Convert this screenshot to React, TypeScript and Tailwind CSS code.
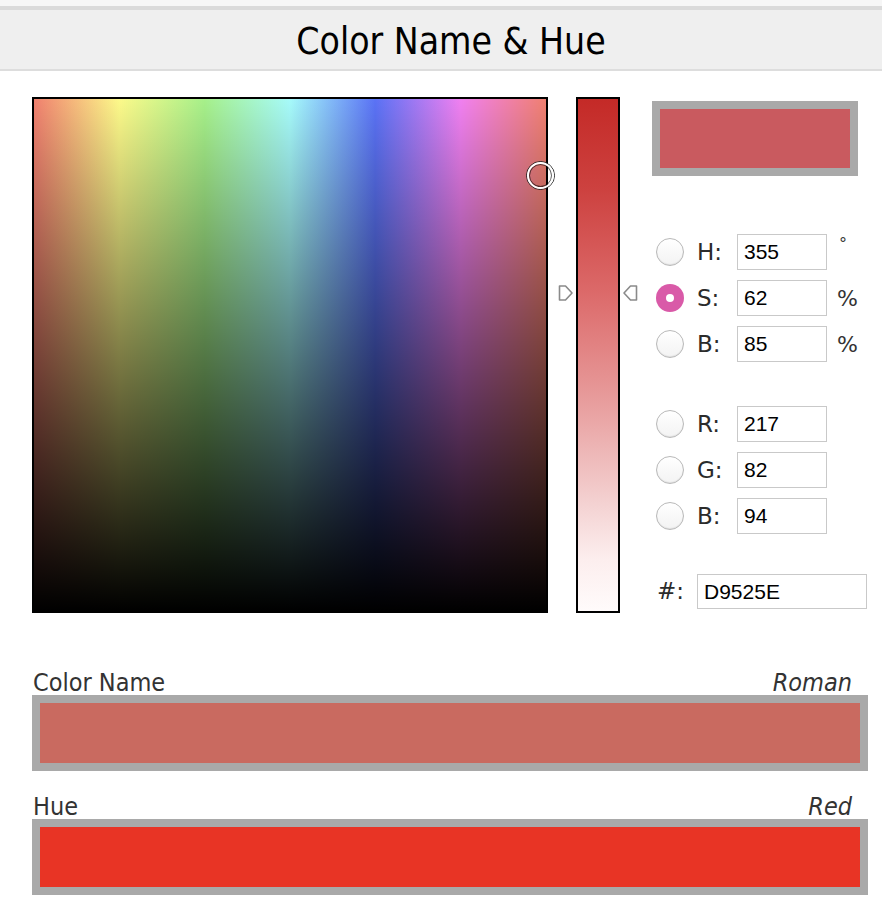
import React from "react";

const labelFont = { fontFamily: '"DejaVu Sans Condensed", "DejaVu Sans", sans-serif', fontStretch: "condensed" } as React.CSSProperties;

function Radio({ checked }: { checked?: boolean }) {
  if (checked) {
    return (
      <div className="w-[28px] h-[28px] rounded-full bg-[#d95aa8] flex items-center justify-center shrink-0">
        <div className="w-[8px] h-[8px] rounded-full bg-white" />
      </div>
    );
  }
  return (
    <div className="w-[28px] h-[28px] rounded-full border border-[#b9b9b9] bg-gradient-to-b from-white to-[#f3f3f3] shadow-[inset_0_-1px_1px_rgba(0,0,0,0.08)] shrink-0" />
  );
}

function Row({ label, value, unit, checked }: { label: string; value: string; unit?: string; checked?: boolean }) {
  return (
    <div className="flex items-center h-[36px] pl-[4px]">
      <Radio checked={checked} />
      <span className="ml-[13px] w-[40px] text-[23px] text-[#2b2b2b] font-['DejaVu_Sans',sans-serif] leading-none">{label}</span>
      <div className="w-[90px] h-[36px] border border-[#c9c9c9] bg-white flex items-center pl-[6px] text-[21px] text-black font-['Liberation_Sans',sans-serif]">
        {value}
      </div>
      {unit && (
        <span className={"ml-[10px] text-[#333] font-['DejaVu_Sans',sans-serif] " + (unit === "°" ? "text-[16px] self-start mt-[-2px] ml-[12px]" : "text-[22px]")}>
          {unit}
        </span>
      )}
    </div>
  );
}

export default function App() {
  return (
    <div className="w-[882px] h-[914px] bg-white overflow-hidden relative">
      {/* top strip */}
      <div className="h-[6px] bg-[#f6f6f6]" />
      <div className="h-[4px] bg-[#dadada]" />
      {/* header */}
      <div className="h-[61px] bg-[#efefef] border-b-2 border-[#dddddd] flex items-center justify-center pt-[4px] pl-[20px]">
        <span className="text-[37px] text-black leading-none" style={labelFont}>
          Color Name &amp; Hue
        </span>
      </div>

      <div className="pl-[32px] pt-[26px]">
        <div className="flex items-start">
          {/* SB square */}
          <div className="relative w-[516px] h-[516px] border-2 border-black">
            <div
              className="absolute inset-0"
              style={{
                background:
                  "linear-gradient(to right, #f0806f 0%, #fcf98a 16.67%, #a6f08a 33.33%, #a6fafa 50%, #5a72f5 66.67%, #f080f0 83.33%, #f08070 100%)",
              }}
            />
            <div className="absolute inset-0 bg-gradient-to-b from-transparent to-black" />
            <div className="absolute left-[492px] top-[62px] w-[29px] h-[29px] rounded-full border-[1.5px] border-[#222]">
              <div className="w-full h-full rounded-full border-[2.5px] border-white shadow-[inset_0_0_0_1px_rgba(0,0,0,0.6)]" />
            </div>
          </div>

          {/* slider */}
          <div className="relative ml-[28px] w-[44px] h-[516px] border-2 border-black"
            style={{
              background:
                "linear-gradient(to bottom, #c42a27 0%, #cd4240 18%, #dc6a6a 38%, #e79a9a 58%, #f3cfcf 78%, #fceeee 90%, #fffbfb 100%)",
            }}
          >
            <svg className="absolute left-[-20px] top-[185px]" width="16" height="18" viewBox="0 0 16 18">
              <path d="M1.5 2 H7.5 L14 9 L7.5 16 H1.5 Z" fill="white" stroke="#8a8a8a" strokeWidth="1.6" strokeLinejoin="round" />
            </svg>
            <svg className="absolute right-[-20px] top-[185px]" width="16" height="18" viewBox="0 0 16 18">
              <path d="M14.5 2 H8.5 L2 9 L8.5 16 H14.5 Z" fill="white" stroke="#8a8a8a" strokeWidth="1.6" strokeLinejoin="round" />
            </svg>
          </div>

          {/* right column */}
          <div className="ml-[32px] w-[216px] pt-[4px]">
            <div className="w-[206px] h-[75px] border-[8px] border-[#a9a9a9] bg-[#c95a5f]" />
            <div className="mt-[58px] flex flex-col gap-[10px]">
              <Row label="H:" value="355" unit="°" />
              <Row label="S:" value="62" unit="%" checked />
              <Row label="B:" value="85" unit="%" />
            </div>
            <div className="mt-[44px] flex flex-col gap-[10px]">
              <Row label="R:" value="217" />
              <Row label="G:" value="82" />
              <Row label="B:" value="94" />
            </div>
            <div className="mt-[40px] flex items-center h-[35px]">
              <span className="w-[32px] text-right text-[23px] text-[#2b2b2b] font-['DejaVu_Sans',sans-serif]">#:</span>
              <div className="ml-[13px] w-[170px] h-[35px] border border-[#c9c9c9] bg-white flex items-center pl-[6px] text-[21px] text-black font-['Liberation_Sans',sans-serif]">
                D9525E
              </div>
            </div>
          </div>
        </div>

        {/* bottom */}
        <div className="w-[836px] mt-[52px]">
          <div className="flex justify-between items-end h-[30px] px-[1px] pr-[16px] text-[25px] text-[#333] leading-none" style={labelFont}>
            <span>Color Name</span>
            <span className="italic">Roman</span>
          </div>
          <div className="h-[76px] border-[8px] border-[#a9a9a9] bg-[#c96a60]" />
          <div className="mt-[18px] flex justify-between items-end h-[30px] px-[1px] pr-[16px] text-[25px] text-[#333] leading-none" style={labelFont}>
            <span>Hue</span>
            <span className="italic">Red</span>
          </div>
          <div className="h-[76px] border-[8px] border-[#a9a9a9] bg-[#e83425]" />
        </div>
      </div>
    </div>
  );
}
